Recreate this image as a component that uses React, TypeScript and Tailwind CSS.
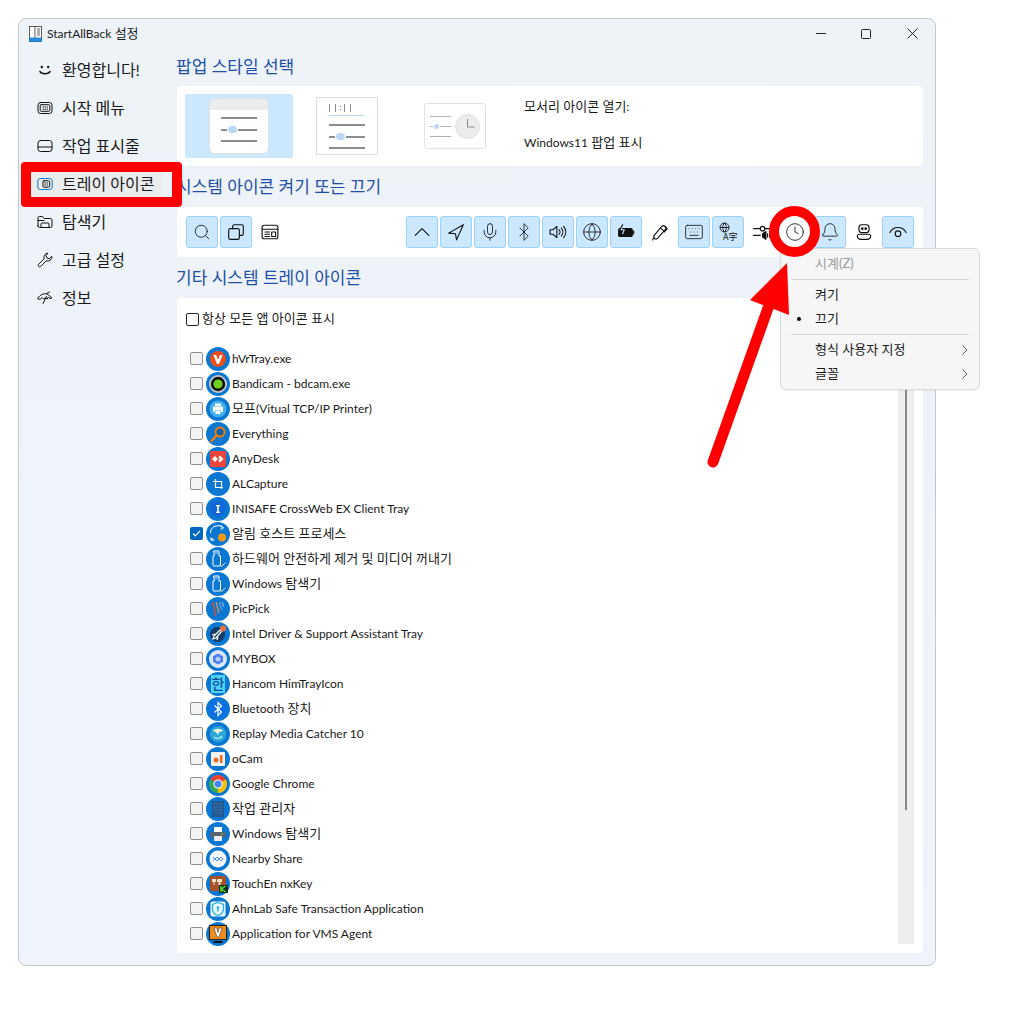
import type { ReactNode } from 'react'
import { Bell, Bluetooth, Clock, Globe, Keyboard, Mic, Search } from 'lucide-react'

const FONT = "font-['Lato','Noto_Sans_CJK_KR',sans-serif]"

function Svg({ children, size = 18 }: { children: ReactNode; size?: number }) {
  return (
    <svg width={size} height={size} viewBox="0 0 16 16" fill="none" stroke="#111" strokeWidth="1" strokeLinecap="round" strokeLinejoin="round">
      {children}
    </svg>
  )
}

// Latin runs sit at 12px, hangul runs at 13px, as in the native dialog font
function Mixed({ text }: { text: string }) {
  return (
    <>
      {text.split(/([가-힣 ]*[가-힣]+)/).map((part, i) =>
        /[가-힣]/.test(part) ? (
          <span key={i} className="text-[13px]">
            {part}
          </span>
        ) : (
          <span key={i}>{part}</span>
        ),
      )}
    </>
  )
}

const NAV = [
  {
    label: '환영합니다!',
    icon: (
      <Svg size={16}>
        <circle cx="4.800" cy="5" r="1.200" fill="#111" stroke="none" />
        <circle cx="11.200" cy="5" r="1.200" fill="#111" stroke="none" />
        <path d="M3 9.500c1.500 3 8.500 3 10 0" strokeWidth="1.600" />
      </Svg>
    ),
  },
  {
    label: '시작 메뉴',
    icon: (
      <Svg size={16}>
        <rect x="1" y="2.500" width="14" height="11" rx="2.500" />
        <rect x="3.200" y="4.700" width="9.600" height="6.600" rx="1" />
        <path d="M6 7h.6M8 7h.6M10 7h.6M6 9.200h.6M8 9.200h.6M10 9.200h.6" />
      </Svg>
    ),
  },
  {
    label: '작업 표시줄',
    icon: (
      <Svg size={16}>
        <rect x="1" y="2.500" width="14" height="11" rx="2.500" />
        <path d="M1 9h14" />
      </Svg>
    ),
  },
  {
    label: '트레이 아이콘',
    active: true,
    icon: (
      <Svg size={16}>
        <rect x="0.800" y="2.500" width="14.400" height="11" rx="2.500" stroke="#0f7ad0" />
        <rect x="6" y="4.800" width="6.600" height="6.400" rx="1" />
        <path d="M8 7h.5M10 7h.5M8 9h.5M10 9h.5" />
      </Svg>
    ),
  },
  {
    label: '탐색기',
    icon: (
      <Svg size={16}>
        <path d="M1 12V4a1.500 1.500 0 0 1 1.500-1.500h3L7.200 4.500h6.300A1.500 1.500 0 0 1 15 6v6a1.500 1.500 0 0 1-1.500 1.500h-11A1.500 1.500 0 0 1 1 12z" />
        <path d="M4 13.500V10a1 1 0 0 1 1-1h6a1 1 0 0 1 1 1v3.500M1 6.500h6" />
      </Svg>
    ),
  },
  {
    label: '고급 설정',
    icon: (
      <Svg size={16}>
        <path d="M10.500 1.200a4 4 0 0 0-3.300 5.500L1.500 12.400a1.500 1.500 0 0 0 2.100 2.100l5.700-5.700a4 4 0 0 0 5.500-4.500L12.300 6.800 10 6 9.200 3.700z" />
      </Svg>
    ),
  },
  {
    label: '정보',
    icon: (
      <Svg size={16}>
        <path d="M.8 8.500C3 3.500 9 3 11 4.500l4 3.500-2.500.5-1.200-1.500-1 2-2-1-1.800 1-1.500-1.500-1.500 1.500z" />
        <path d="M9.500 6.500l-3.500 7M9.500 3.500l3-1.500" />
      </Svg>
    ),
  },
]

function TrayBtn({ on, children }: { on?: boolean; children: ReactNode }) {
  return (
    <div
      className={`flex h-[32px] w-[32px] items-center justify-center rounded-[3px] border ${
        on ? 'border-[#99d1ff] bg-[#cce8ff]' : 'border-transparent'
      }`}
    >
      {children}
    </div>
  )
}

const lu = { size: 20, strokeWidth: 1, color: '#111' }

function AppIcon({ children }: { children?: ReactNode }) {
  return (
    <svg width="24" height="24" viewBox="0 0 24 24" fill="none" className="shrink-0">
      <circle cx="12" cy="12" r="12" fill="#0a78d2" />
      {children}
    </svg>
  )
}

const UsbIcon = (
  <g stroke="#fff" strokeWidth="1" strokeLinejoin="round" strokeLinecap="round">
    <path d="M8 4h5v5h1.500v9a1 1 0 0 1-1 1H8a1 1 0 0 1-1-1V9h1z" />
    <path d="M9.500 6h.5M11 6h.5M14 18l1.500 1.500L19 16" />
  </g>
)

const APPS: { name: string; checked?: boolean; icon: ReactNode }[] = [
  {
    name: 'hVrTray.exe',
    icon: (
      <>
        <circle cx="12" cy="12" r="8" fill="#e8501e" />
        <path d="M7.500 8h2.600l1.900 5 1.900-5h2.600L13 17h-2z" fill="#fff" />
      </>
    ),
  },
  {
    name: 'Bandicam - bdcam.exe',
    icon: (
      <>
        <circle cx="12" cy="12" r="9" fill="#c9c9c9" />
        <circle cx="12" cy="12" r="7.200" fill="#111" />
        <circle cx="12" cy="12" r="4.600" fill="#6fd11b" />
      </>
    ),
  },
  {
    name: '모프(Vitual TCP/IP Printer)',
    icon: (
      <>
        <circle cx="12" cy="12" r="8.500" fill="#43b0ef" />
        <path d="M9 6.500h6V9H9zM7 9.500h10V15h-2v-2H9v2H7zM9.500 13.500h5V17h-5z" fill="#fff" />
      </>
    ),
  },
  {
    name: 'Everything',
    icon: (
      <>
        <circle cx="14" cy="10" r="4.500" stroke="#f07c10" strokeWidth="2" fill="#0a5fa6" />
        <path d="M10.500 13.500L5.500 19" stroke="#f07c10" strokeWidth="2.600" strokeLinecap="round" />
      </>
    ),
  },
  {
    name: 'AnyDesk',
    icon: (
      <>
        <rect x="4" y="4" width="16" height="16" fill="#ef443b" />
        <path d="M9 9l3 3-3 3-3-3zM14 8.500l3.500 3.500-3.500 3.500-1.800-1.800 1.700-1.700-1.700-1.700z" fill="#fff" />
      </>
    ),
  },
  {
    name: 'ALCapture',
    icon: <path d="M9.500 7v8.500H17M7 9.500h8.500V17" stroke="#fff" strokeWidth="1.200" />,
  },
  {
    name: 'INISAFE CrossWeb EX Client Tray',
    icon: (
      <>
        <path d="M12 3.500l7.500 2.500v6c0 4.500-3.500 7-7.500 8.500C8 19 4.500 16.500 4.500 12V6z" fill="#1467d8" />
        <path d="M10 8h4v1.200h-1.200v5.600H14V16h-4v-1.200h1.200V9.200H10z" fill="#fff" />
      </>
    ),
  },
  {
    name: '알림 호스트 프로세스',
    checked: true,
    icon: (
      <>
        <path d="M4.500 11a7.500 7.500 0 0 1 12.500-5.500M6.500 18.500a7.500 7.500 0 0 1-2-3" stroke="#fff" strokeWidth="1" />
        <path d="M14.500 3.500L17.500 5.800 14.500 7.500M4.500 18h4M4.500 18l2.500-2" stroke="#fff" strokeWidth="1" />
        <circle cx="16" cy="15.500" r="4" fill="#f59a14" />
      </>
    ),
  },
  { name: '하드웨어 안전하게 제거 및 미디어 꺼내기', icon: UsbIcon },
  { name: 'Windows 탐색기', icon: UsbIcon },
  {
    name: 'PicPick',
    icon: (
      <>
        <path d="M6 5l3 14h1.600L7.500 5z" fill="#c9553c" />
        <path d="M9.500 5l2.500 11h1.500L11 5z" fill="#c98e5c" />
        <path d="M13 5l1.800 8h1.300L14.500 5z" fill="#6c9bd0" />
        <path d="M16 5l1 5h1l-1-5z" fill="#8dbbe6" />
      </>
    ),
  },
  {
    name: 'Intel Driver & Support Assistant Tray',
    icon: (
      <>
        <circle cx="11.500" cy="12.500" r="7.500" fill="#123a66" />
        <path d="M7 17l3-1 6-7-2-1-6 6zM6 13l3-1M11 18l1-3" stroke="#fff" strokeWidth="1.300" />
        <circle cx="17" cy="6.500" r="3" fill="#e8743a" />
      </>
    ),
  },
  {
    name: 'MYBOX',
    icon: (
      <>
        <circle cx="12" cy="12" r="9" fill="#dbe6fb" />
        <path d="M12 6.500l5 2.800v5.400l-5 2.800-5-2.800V9.300z" fill="#4a7df0" />
        <path d="M12 9.500l2.500 1.400v2.400L12 14.700l-2.500-1.400v-2.400z" fill="#b9cffa" />
      </>
    ),
  },
  {
    name: 'Hancom HimTrayIcon',
    icon: (
      <>
        <rect x="5" y="3" width="14" height="18" fill="#4fd2fa" />
        <text x="12" y="17" textAnchor="middle" fontSize="14" fontWeight="500" fill="#0a4a96" fontFamily="'Noto Sans CJK KR'">
          한
        </text>
      </>
    ),
  },
  {
    name: 'Bluetooth 장치',
    icon: (
      <>
        <circle cx="12" cy="12" r="9" fill="#0d6fe8" />
        <path d="M8.500 8.500l7 6.500-3.500 3.500V5.500L15.500 9l-7 6.500" stroke="#fff" strokeWidth="1.200" />
      </>
    ),
  },
  {
    name: 'Replay Media Catcher 10',
    icon: (
      <>
        <circle cx="12" cy="12" r="8" fill="#2fa6d8" />
        <path d="M7 9c2-3 8-3 10 0l-4 1-1 3-2-3z" fill="#f2f6d8" />
        <path d="M8 15c2 2 6 2 8-1" stroke="#a9ecf4" strokeWidth="1.500" />
      </>
    ),
  },
  {
    name: 'oCam',
    icon: (
      <>
        <rect x="5" y="5" width="14" height="14" rx="1" fill="#f4f1ec" />
        <circle cx="10" cy="13" r="2.500" fill="#ea6a2a" />
        <rect x="14" y="8" width="2.500" height="8" fill="#ea6a2a" />
      </>
    ),
  },
  {
    name: 'Google Chrome',
    icon: (
      <>
        <path d="M12 12L4.200 7.500A9 9 0 0 1 19.800 7.500z" fill="#ea4335" />
        <path d="M12 12L4.200 7.500A9 9 0 0 0 12 21z" fill="#34a853" />
        <path d="M12 12L19.800 7.500A9 9 0 0 1 12 21z" fill="#fbbc05" />
        <circle cx="12" cy="12" r="4.600" fill="#fff" />
        <circle cx="12" cy="12" r="3.500" fill="#4285f4" />
      </>
    ),
  },
  {
    name: '작업 관리자',
    icon: (
      <>
        <rect x="6" y="4" width="12" height="16" fill="#184d86" />
        <path d="M8 4v16M10 4v16M12 4v16M14 4v16M16 4v16M6 7h12M6 10h12M6 13h12M6 16h12" stroke="#4c7fb5" strokeWidth="0.500" />
      </>
    ),
  },
  {
    name: 'Windows 탐색기',
    icon: (
      <>
        <path d="M8 5h8v5H8z" fill="#fff" />
        <path d="M4.500 10h15v6h-3v-2h-9v2h-3z" fill="#5b6470" />
        <path d="M8 14h8v5H8z" fill="#e8ecef" />
        <rect x="15" y="11.500" width="2" height="1" fill="#5fd35f" />
      </>
    ),
  },
  {
    name: 'Nearby Share',
    icon: (
      <>
        <circle cx="12" cy="12" r="8.500" fill="#f4f8fe" />
        <path d="M7 10l4 4 2-2 2 2 2-2M7 14l4-4 2 2 2-2 2 2" stroke="#4a8cf0" strokeWidth="1" />
      </>
    ),
  },
  {
    name: 'TouchEn nxKey',
    icon: (
      <>
        <rect x="4" y="4" width="16" height="15" fill="#a6522a" />
        <path d="M6 7h4v3H8.500v3H7.500v-3H6zM11 7h5v3h-1.500v3h-2v-3H11z" fill="#f5e2c8" />
        <rect x="13" y="13" width="9" height="8" fill="#123018" />
        <path d="M15 14v6M19.500 14L15.500 17l4 3" stroke="#5fe03c" strokeWidth="1.400" />
      </>
    ),
  },
  {
    name: 'AhnLab Safe Transaction Application',
    icon: (
      <>
        <rect x="4.500" y="4.500" width="15" height="15" rx="2" fill="#eef7fb" />
        <path d="M12 5.500l5.500 2v4.500c0 3.500-2.500 5.500-5.500 6.500-3-1-5.500-3-5.500-6.500V7.500z" stroke="#1eb3dd" strokeWidth="1.300" />
        <circle cx="12" cy="10.500" r="1.300" fill="#1eb3dd" />
        <path d="M12 11v3.500" stroke="#1eb3dd" strokeWidth="1.300" />
      </>
    ),
  },
  {
    name: 'Application for VMS Agent',
    icon: (
      <>
        <rect x="3.500" y="3.500" width="17" height="14" fill="#f08a1c" stroke="#222" />
        <path d="M8 6h2.800L12 10.500 13.200 6H16l-3 9h-2z" fill="#fff" stroke="#222" strokeWidth="0.500" />
        <path d="M7.500 20h9" stroke="#111" strokeWidth="2" />
      </>
    ),
  },
]

function PopupLines({ w }: { w: string }) {
  return (
    <div className={`flex flex-col gap-[7px] ${w}`}>
      <div className="h-[2px] bg-[#8c8c8c]" />
      <div className="flex items-center gap-[1px]">
        <div className="h-[2px] w-[6px] bg-[#8c8c8c]" />
        <div className="h-[7px] w-[9px] rounded-full bg-[#bcd8f5]" />
        <div className="h-[2px] flex-1 bg-[#8c8c8c]" />
      </div>
      <div className="h-[2px] bg-[#8c8c8c]" />
    </div>
  )
}

function Heading({ children, className }: { children: ReactNode; className: string }) {
  return <h2 className={`-ml-[1px] flex items-center text-[17px] leading-none text-[#1c4fa8] ${className}`}>{children}</h2>
}

function MenuItem({ label, dot, arrow, disabled }: { label: string; dot?: boolean; arrow?: boolean; disabled?: boolean }) {
  return (
    <div className={`relative flex h-[24px] items-center pl-[34px] text-[13px] ${disabled ? 'text-[#9a9a9a]' : 'text-[#1a1a1a]'}`}>
      {dot && <span className="absolute left-[16px] h-[4px] w-[4px] rounded-full bg-black" />}
      {label}
      {arrow && (
        <svg className="absolute right-[11px]" width="6" height="10" viewBox="0 0 6 10" fill="none" stroke="#555" strokeWidth="1">
          <path d="M.5.500L5 5 .5 9.500" />
        </svg>
      )}
    </div>
  )
}

export default function App() {
  return (
    <div className={`relative h-[1010px] w-[1024px] overflow-hidden bg-white pt-[18px] pl-[18px] text-[12px] text-[#1a1a1a] ${FONT}`}>
      <div className="flex h-[948px] w-[918px] flex-col rounded-[8px] border border-[#c4c6c8] bg-gradient-to-b from-[#eef3f8] to-[#eff3fb]">
        {/* title bar */}
        <div className="flex h-[29px] shrink-0 items-center pl-[10px]">
          <svg width="13" height="16" viewBox="0 0 13 16" fill="none" stroke="#333" strokeWidth="0.800">
            <rect x="0.500" y="0.500" width="12" height="15" fill="#fff" />
            <path d="M6 0.500v12M8 3h3M8 5h3M8 7h3M8 9h3" />
            <rect x="0.500" y="12" width="12" height="3.500" fill="#2b8fe0" stroke="#1b75c0" />
          </svg>
          <span className="ml-[5px]">
            <Mixed text="StartAllBack 설정" />
          </span>
          <div className="ml-auto flex items-center gap-[35px] pr-[17px]">
            <span className="h-[1px] w-[10px] bg-[#222]" />
            <span className="h-[10px] w-[10px] rounded-[1.500px] border border-[#222]" />
            <svg className="ml-[1px]" width="11" height="11" viewBox="0 0 11 11" stroke="#222" strokeWidth="1">
              <path d="M.5.500l10 10M10.500.500l-10 10" />
            </svg>
          </div>
        </div>

        <div className="flex min-h-0 flex-1">
          {/* sidebar */}
          <nav className="flex w-[158px] shrink-0 flex-col pt-[9px] pl-[12px]">
            {NAV.map((n) => (
              <div
                key={n.label}
                className={`mb-[12px] flex h-[26px] w-[131px] items-center gap-[9px] pl-[6px] text-[16px] ${n.active ? 'bg-[#ebeced]' : ''}`}
              >
                {n.icon}
                <span>{n.label}</span>
              </div>
            ))}
          </nav>

          {/* main */}
          <main className="flex min-w-0 flex-1 flex-col pr-[12px] pb-[12px]">
            <Heading className="h-[38px] pb-[2px]">팝업 스타일 선택</Heading>
            <section className="flex h-[80px] shrink-0 items-center rounded-[4px] bg-white pl-[8px]">
              <div className="flex h-[64px] w-[108px] items-center justify-center rounded-[2px] bg-[#cce8ff]">
                <div className="h-[56px] w-[60px] overflow-hidden rounded-[6px] border border-[#e2e2e2] bg-white">
                  <div className="h-[11px] bg-[#ececec]" />
                  <div className="flex justify-center pt-[7px]">
                    <PopupLines w="w-[36px]" />
                  </div>
                </div>
              </div>
              <div className="ml-[23px] h-[58px] w-[62px] border border-[#dedede] px-[12px] pt-[6px]">
                <svg className="block" width="24" height="8" viewBox="0 0 24 8" stroke="#8c8c8c" strokeWidth="1">
                  <path d="M.5 0v8M6.500 0v8M11.500 2v1M11.500 5v1M15.500 0v8M21.500 0v8" />
                </svg>
                <div className="mt-[3px] mb-[8px] h-[1px] bg-[#bcd8f5]" />
                <PopupLines w="w-[36px]" />
              </div>
              <div className="ml-[46px] flex h-[46px] w-[62px] items-center gap-[4px] rounded-[3px] border border-[#e2e2e2] px-[5px]">
                <div className="flex w-[21px] flex-col gap-[7px]">
                  <div className="h-[1px] bg-[#b0b0b0]" />
                  <div className="flex items-center gap-[1px]">
                    <div className="h-[1px] w-[3px] bg-[#b0b0b0]" />
                    <div className="h-[5px] w-[5px] rounded-full bg-[#bcd8f5]" />
                    <div className="h-[1px] flex-1 bg-[#b0b0b0]" />
                  </div>
                  <div className="h-[1px] bg-[#b0b0b0]" />
                </div>
                <svg width="25" height="25" viewBox="0 0 25 25" fill="#ececec" stroke="#8c8c8c">
                  <circle cx="12.500" cy="12.500" r="12" stroke="#e0e0e0" />
                  <path d="M12.500 5v8h7" fill="none" />
                </svg>
              </div>
              <div className="mb-[4px] ml-[38px] flex flex-col gap-[21px] leading-[14px]">
                <span className="text-[13px]">
                  모서리 아이콘 열기<span className="text-[12px]">:</span>
                </span>
                <span>
                  <Mixed text="Windows11 팝업 표시" />
                </span>
              </div>
            </section>

            <Heading className="h-[41px]">시스템 아이콘 켜기 또는 끄기</Heading>
            <section className="flex h-[50px] shrink-0 items-center rounded-[4px] bg-white pr-[9px] pl-[9px]">
              <div className="flex gap-[2px]">
                <TrayBtn on>
                  <Search size={18} strokeWidth={1.100} color="#111" />
                </TrayBtn>
                <TrayBtn on>
                  <Svg>
                    <rect x="1.500" y="5" width="9.500" height="9.500" rx="1.500" />
                    <path d="M5 5V3a1.500 1.500 0 0 1 1.500-1.500h6.500a1.500 1.500 0 0 1 1.500 1.500v6.500a1.500 1.500 0 0 1-1.500 1.500H11" />
                  </Svg>
                </TrayBtn>
                <TrayBtn>
                  <Svg>
                    <rect x="1" y="2" width="14" height="12" rx="2" />
                    <path d="M1 5.500h14M3.500 8h4M3.500 10h4M3.500 12h4" />
                    <rect x="9.500" y="8" width="3.500" height="4" />
                  </Svg>
                </TrayBtn>
              </div>
              <div className="ml-auto flex gap-[2px]">
                <TrayBtn on>
                  <Svg>
                    <path d="M2 11l6-6 6 6" />
                  </Svg>
                </TrayBtn>
                <TrayBtn on>
                  <Svg>
                    <path d="M14.500 1.500L1.500 9l6 .5 1 5.500z" />
                  </Svg>
                </TrayBtn>
                <TrayBtn on>
                  <Mic {...lu} />
                </TrayBtn>
                <TrayBtn on>
                  <Bluetooth {...lu} />
                </TrayBtn>
                <TrayBtn on>
                  <Svg>
                    <path d="M1 6v4h2.500L7 13V3L3.500 6zM9 6c1 1 1 3 0 4M11 4.500c1.800 2 1.800 5 0 7M13 3c2.500 3 2.500 7 0 10" />
                  </Svg>
                </TrayBtn>
                <TrayBtn on>
                  <Globe {...lu} />
                </TrayBtn>
                <TrayBtn on>
                  <Svg>
                    <rect x="1.500" y="5" width="12" height="7" rx="1" fill="#111" />
                    <path d="M14.500 7.500v2" strokeWidth="1.600" />
                    <path d="M5 2L3.500 6h3L5 9.500" stroke="#cce8ff" />
                    <path d="M5 1.500L3 5" />
                  </Svg>
                </TrayBtn>
                <TrayBtn>
                  <Svg>
                    <path d="M2.500 11.500L9.500 3a2.200 2.200 0 0 1 3.500 2.500L6 13.500c-1.200 1.300-3.500 1-3.500-.8z" />
                    <path d="M1.500 15c.3-1 .7-1.500 1.200-2M8.500 4.500l3 2.500M12.500 3l2 2-2.500 3" />
                  </Svg>
                </TrayBtn>
                <TrayBtn on>
                  <Keyboard {...lu} />
                </TrayBtn>
                <TrayBtn on>
                  <svg width="20" height="20" viewBox="0 0 20 20" fill="none" stroke="#111" strokeWidth="0.900">
                    <circle cx="6.500" cy="5.500" r="4.500" />
                    <path d="M2 5.500h9M6.500 1c-2.400 2.500-2.400 6.500 0 9M6.500 1c2.400 2.500 2.400 6.500 0 9" />
                    <text x="5" y="18" fontSize="9" fill="#111" stroke="none" fontFamily="'Noto Sans CJK KR'">
                      A字
                    </text>
                  </svg>
                </TrayBtn>
                <TrayBtn>
                  <Svg>
                    <path d="M.5 5h6M10.500 5h5M.5 11h6" />
                    <circle cx="8.500" cy="5" r="2" />
                    <path d="M8.500 9.500v3l3 2v-7z" fill="#111" />
                    <path d="M13 9.500v3M15 9v4" />
                  </Svg>
                </TrayBtn>
                <TrayBtn>
                  <Clock {...lu} />
                </TrayBtn>
                <TrayBtn on>
                  <Bell {...lu} />
                </TrayBtn>
                <TrayBtn>
                  <Svg>
                    <rect x="3.500" y="1.500" width="9" height="7" rx="2.500" />
                    <circle cx="6.500" cy="5" r=".7" fill="#111" />
                    <circle cx="9.500" cy="5" r=".7" fill="#111" />
                    <path d="M2 11.500a2 2 0 0 1 2-1.500h8a2 2 0 0 1 2 1.500c0 2-2 3-3 3H5c-1 0-3-1-3-3z" />
                  </Svg>
                </TrayBtn>
                <TrayBtn on>
                  <Svg>
                    <path d="M.8 8.500c3-6 11.400-6 14.400 0" />
                    <circle cx="8" cy="9.500" r="2.500" />
                  </Svg>
                </TrayBtn>
              </div>
            </section>

            <Heading className="h-[41px]">기타 시스템 트레이 아이콘</Heading>
            <section className="flex min-h-0 flex-1 rounded-[4px] bg-white pt-[10px] pr-[9px] pb-[9px] pl-[9px]">
              <div className="min-w-0 flex-1">
                <label className="flex h-[22px] items-center gap-[3px] text-[13px]">
                  <span className="h-[13px] w-[13px] rounded-[2px] border border-[#222] bg-white" />
                  항상 모든 앱 아이콘 표시
                </label>
                <ul className="mt-[16px] pl-[4px]">
                  {APPS.map((a, i) => (
                    <li key={i} className="flex h-[25px] items-center">
                      {a.checked ? (
                        <span className="flex h-[13px] w-[13px] items-center justify-center rounded-[2px] bg-[#0067c0]">
                          <svg width="9" height="9" viewBox="0 0 9 9" fill="none" stroke="#fff" strokeWidth="1.200">
                            <path d="M1 4.500l2.300 2.300L8 1.800" />
                          </svg>
                        </span>
                      ) : (
                        <span className="h-[13px] w-[13px] rounded-[2px] border border-[#8f8f8f] bg-[#f3f3f3]" />
                      )}
                      <span className="mr-[2px] ml-[3px] flex">
                        <AppIcon>{a.icon}</AppIcon>
                      </span>
                      <span>
                        <Mixed text={a.name} />
                      </span>
                    </li>
                  ))}
                </ul>
              </div>
              <div className="relative w-[16px] shrink-0 bg-[#eeeeee]">
                <div className="mx-auto h-[calc(100%-134px)] w-[2px] bg-[#888]" />
              </div>
            </section>
          </main>
        </div>
      </div>

      {/* context menu */}
      <div className="absolute top-[248px] left-[780px] h-[142px] w-[200px] rounded-[6px] border border-[#dcdcdc] bg-[#f6f6f6] pt-[3px] shadow-[0_1px_2px_rgba(0,0,0,0.06)]">
        <MenuItem label="시계(Z)" disabled />
        <div className="mx-[10px] my-[3px] h-[1px] bg-[#d9d9d9]" />
        <MenuItem label="켜기" />
        <MenuItem label="끄기" dot />
        <div className="mx-[10px] my-[3px] h-[1px] bg-[#d9d9d9]" />
        <MenuItem label="형식 사용자 지정" arrow />
        <MenuItem label="글꼴" arrow />
      </div>

      {/* red annotations */}
      <div className="absolute top-[162px] left-[21px] h-[45px] w-[161px] rounded-[4px] border-[10px] border-[#ff0000]" />
      <div className="absolute top-[206px] left-[769px] flex h-[51px] w-[51px] items-center justify-center rounded-full border-[10px] border-[#ff0000] bg-white">
        <Clock {...lu} />
      </div>
      <svg className="absolute top-0 left-0" width="1024" height="1010" viewBox="0 0 1024 1010" fill="none">
        <path d="M713 462L768 308" stroke="#ff0000" strokeWidth="11" strokeLinecap="round" />
        <path d="M787 263L750 300 789 315z" fill="#ff0000" />
      </svg>
    </div>
  )
}
